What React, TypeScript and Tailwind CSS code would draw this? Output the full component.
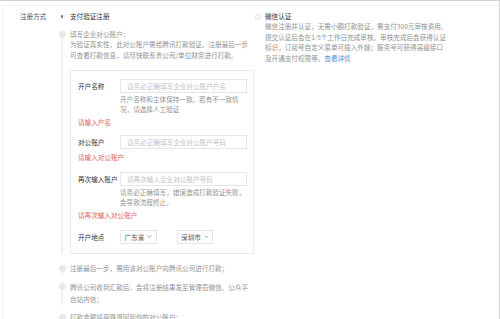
import React from "react";

function Caret() {
  return (
    <svg width="5" height="3" viewBox="0 0 5 3" className="ml-[3px]">
      <path d="M0.5 0.5 L2.5 2.5 L4.5 0.5" fill="none" stroke="#999" strokeWidth="0.8" />
    </svg>
  );
}

function Step({ children, pb }: { children: React.ReactNode; pb: string }) {
  return (
    <div className={`flex ${pb}`}>
      <div className="w-[8px] flex flex-col items-center shrink-0">
        <div className="w-[7px] h-[7px] rounded-full bg-[#e9e9e9] mt-[2px] shrink-0" />
        <div className="w-[1.5px] flex-1 bg-[#efefef]" />
      </div>
      <div className="ml-[4px] flex-1 min-w-0">{children}</div>
    </div>
  );
}

function Input({ text }: { text: string }) {
  return (
    <div className="w-[127px] h-[14px] border border-[#e6e6e6] flex items-center pl-[6px] text-[#c2c2c2] whitespace-nowrap">
      {text}
    </div>
  );
}

export default function App() {
  return (
    <div className="w-[500px] h-[319px] overflow-hidden bg-white border-t border-r border-[#d2d2d2] font-['Noto_Sans_CJK_SC',sans-serif] text-[6.6px] leading-[10.7px] text-[#939393]">
      <div className="h-full ml-[2px] mt-[4px] border-t border-l border-[#f3f3f3] flex pt-[5px]">
        <div className="w-[38px] ml-[17px] shrink-0 text-[#555] leading-[11px]">注册方式</div>

        {/* left column */}
        <div className="w-[196px] shrink-0 flex flex-col">
          <div className="flex items-center h-[11px]">
            <div className="w-[8px] flex justify-center">
              <div className="w-[5px] h-[5px] rounded-full border border-[#efefef] flex items-center justify-center">
                <div className="w-[2.5px] h-[2.5px] rounded-full bg-[#777]" />
              </div>
            </div>
            <div className="ml-[4px] text-[#333]">支付验证注册</div>
          </div>

          <div className="mt-[7px] flex flex-col">
            <Step pb="pb-[9px]">
              <div className="whitespace-nowrap">
                填写企业对公账户：
                <br />
                为验证真实性，此对公账户需给腾讯打款验证。注册最后一步
                <br />
                可查看打款信息，请尽快联系贵公司/单位财务进行打款。
              </div>
              <div className="mt-[9px] w-[184px] border border-[#ececec] pt-[8px] pb-[9px] pl-[7px] leading-[10px]">
                <div className="flex items-center">
                  <div className="w-[42px] text-[#333]">开户名称</div>
                  <Input text="请务必正确填写企业对公账户户名" />
                </div>
                <div className="ml-[42px] mt-[1px] leading-[10.5px] whitespace-nowrap">
                  开户名称和主体保持一致。若有不一致情
                  <br />
                  况，请选择人工验证
                </div>
                <div className="mt-[2px] text-[#e0625c]">请输入户名</div>

                <div className="flex items-center mt-[8px]">
                  <div className="w-[42px] text-[#333]">对公账户</div>
                  <Input text="请务必正确填写企业对公账户号码" />
                </div>
                <div className="mt-[3px] text-[#e0625c]">请输入对公账户</div>

                <div className="flex items-center mt-[10px]">
                  <div className="w-[42px] text-[#333] whitespace-nowrap">再次输入账户</div>
                  <Input text="请再次输入企业对公账户号码" />
                </div>
                <div className="ml-[42px] mt-[1.5px] whitespace-nowrap">
                  请务必正确填写，错误造成打款验证失败，
                  <br />
                  会导致流程终止。
                </div>
                <div className="mt-[2.5px] text-[#e0625c]">请再次输入对公账户</div>

                <div className="flex items-center mt-[10px]">
                  <div className="w-[42px] text-[#333]">开户地点</div>
                  <div className="w-[37px] h-[14px] border border-[#e6e6e6] flex items-center justify-center text-[#555]">
                    广东省
                    <Caret />
                  </div>
                  <div className="w-[36px] h-[14px] ml-[20px] border border-[#e6e6e6] flex items-center justify-center text-[#555]">
                    深圳市
                    <Caret />
                  </div>
                </div>
              </div>
            </Step>
            <Step pb="pb-[7px]">
              <div className="whitespace-nowrap leading-[11px]">注册最后一步，需用该对公账户向腾讯公司进行打款；</div>
            </Step>
            <Step pb="pb-[7px]">
              <div className="whitespace-nowrap leading-[12px]">
                腾讯公司收到汇款后，会将注册结果发至管理员微信、公众平
                <br />
                台站内信；
              </div>
            </Step>
            <Step pb="pb-[10px]">
              <div className="whitespace-nowrap leading-[11px]">打款金额将原路退回到你的对公账户；</div>
            </Step>
          </div>
        </div>

        {/* right column */}
        <div className="flex-1 flex">
          <div className="w-[11px] shrink-0 flex pt-[2.5px]">
            <div className="ml-[1px] w-[6px] h-[6px] rounded-full border border-[#dedede]" />
          </div>
          <div className="whitespace-nowrap">
            <div className="text-[#333] leading-[9px] mt-[1px]">微信认证</div>
            <div>
              微信注册并认证，无需小额打款验证，需支付300元审核费用。
              <br />
              提交认证后会在1-5个工作日完成审核。审核完成后会获得认证
              <br />
              标识，订阅号自定义菜单可插入外链；服务号可获得高级接口
              <br />
              及开通支付权限等。<span className="text-[#4a90e2]">查看详情</span>
            </div>
          </div>
        </div>
      </div>
    </div>
  );
}
